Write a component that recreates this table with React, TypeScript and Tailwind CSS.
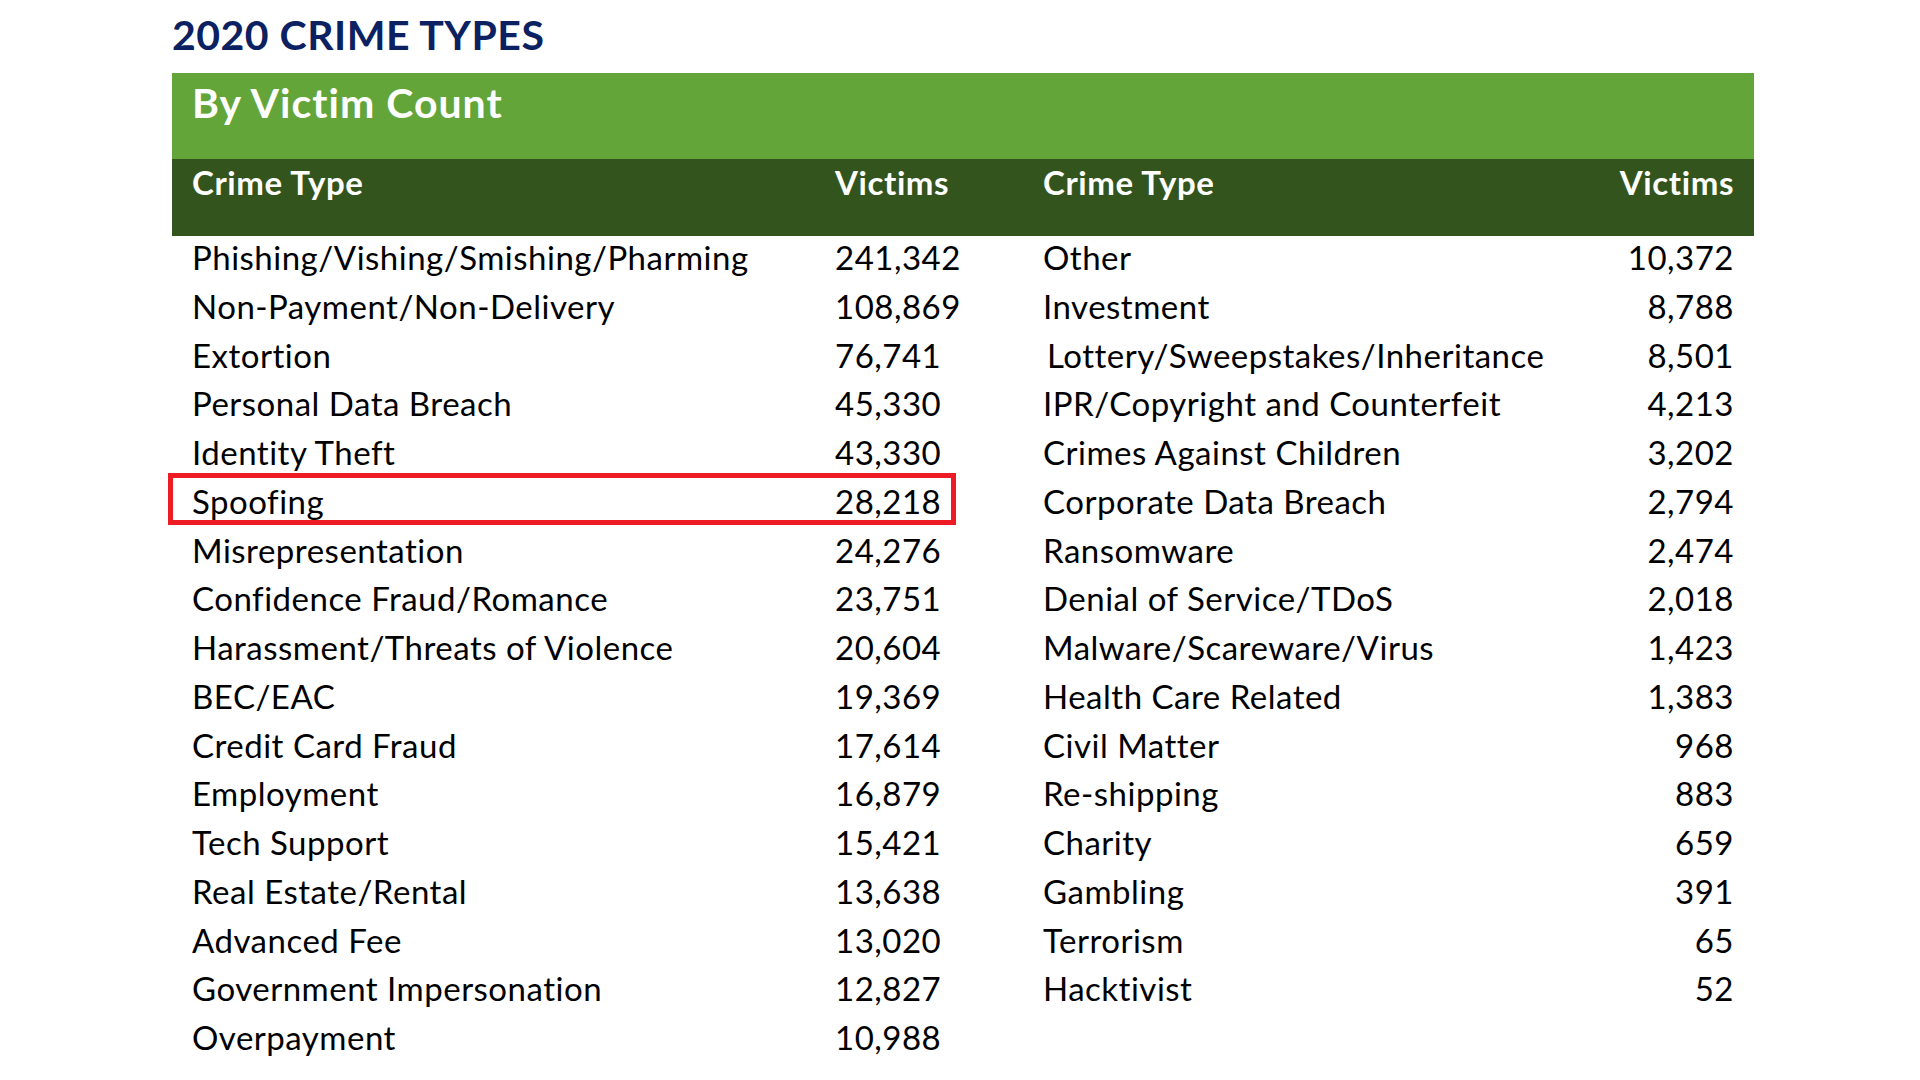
const leftRows = [
  ["Phishing/Vishing/Smishing/Pharming", "241,342"],
  ["Non-Payment/Non-Delivery", "108,869"],
  ["Extortion", "76,741"],
  ["Personal Data Breach", "45,330"],
  ["Identity Theft", "43,330"],
  ["Spoofing", "28,218"],
  ["Misrepresentation", "24,276"],
  ["Confidence Fraud/Romance", "23,751"],
  ["Harassment/Threats of Violence", "20,604"],
  ["BEC/EAC", "19,369"],
  ["Credit Card Fraud", "17,614"],
  ["Employment", "16,879"],
  ["Tech Support", "15,421"],
  ["Real Estate/Rental", "13,638"],
  ["Advanced Fee", "13,020"],
  ["Government Impersonation", "12,827"],
  ["Overpayment", "10,988"],
];

const rightRows = [
  ["Other", "10,372"],
  ["Investment", "8,788"],
  ["Lottery/Sweepstakes/Inheritance", "8,501"],
  ["IPR/Copyright and Counterfeit", "4,213"],
  ["Crimes Against Children", "3,202"],
  ["Corporate Data Breach", "2,794"],
  ["Ransomware", "2,474"],
  ["Denial of Service/TDoS", "2,018"],
  ["Malware/Scareware/Virus", "1,423"],
  ["Health Care Related", "1,383"],
  ["Civil Matter", "968"],
  ["Re-shipping", "883"],
  ["Charity", "659"],
  ["Gambling", "391"],
  ["Terrorism", "65"],
  ["Hacktivist", "52"],
];

export default function App() {
  return (
    <div className="w-[1920px] h-[1080px] bg-white overflow-hidden pl-[172px] font-['Lato',sans-serif]">
      <div className="h-[73px] pt-[14px] text-[41px] leading-none font-bold tracking-[0.5px] text-[#0b2161]">
        2020 CRIME TYPES
      </div>
      <div className="w-[1582px]">
        <div className="h-[86px] bg-[#63a539] pl-5 pt-[9px] text-[41px] leading-none font-bold tracking-[1px] text-white">
          By Victim Count
        </div>
        <div className="h-[77px] bg-[#33541d] px-5 pt-[7px] grid grid-cols-[643px_208px_1fr_auto] text-[33px] leading-none font-bold tracking-[0.6px] text-white">
          <div>Crime Type</div>
          <div>Victims</div>
          <div>Crime Type</div>
          <div className="text-right">Victims</div>
        </div>
        <div className="relative -mt-[3px] px-5 grid grid-cols-[643px_208px_1fr_auto] text-[33px] leading-[48.75px] tracking-[0.5px] text-black">
          {leftRows.map((row, i) => {
            const right = rightRows[i];
            return (
              <div key={i} className="contents">
                <div>{row[0]}</div>
                <div>{row[1]}</div>
                <div className={i === 2 ? "pl-[4px]" : ""}>{right ? right[0] : ""}</div>
                <div className="text-right">{right ? right[1] : ""}</div>
              </div>
            );
          })}
          <div className="absolute left-[-4px] top-[240px] w-[788px] h-[52px] border-[5px] border-[#ed1c24]" />
        </div>
      </div>
    </div>
  );
}
